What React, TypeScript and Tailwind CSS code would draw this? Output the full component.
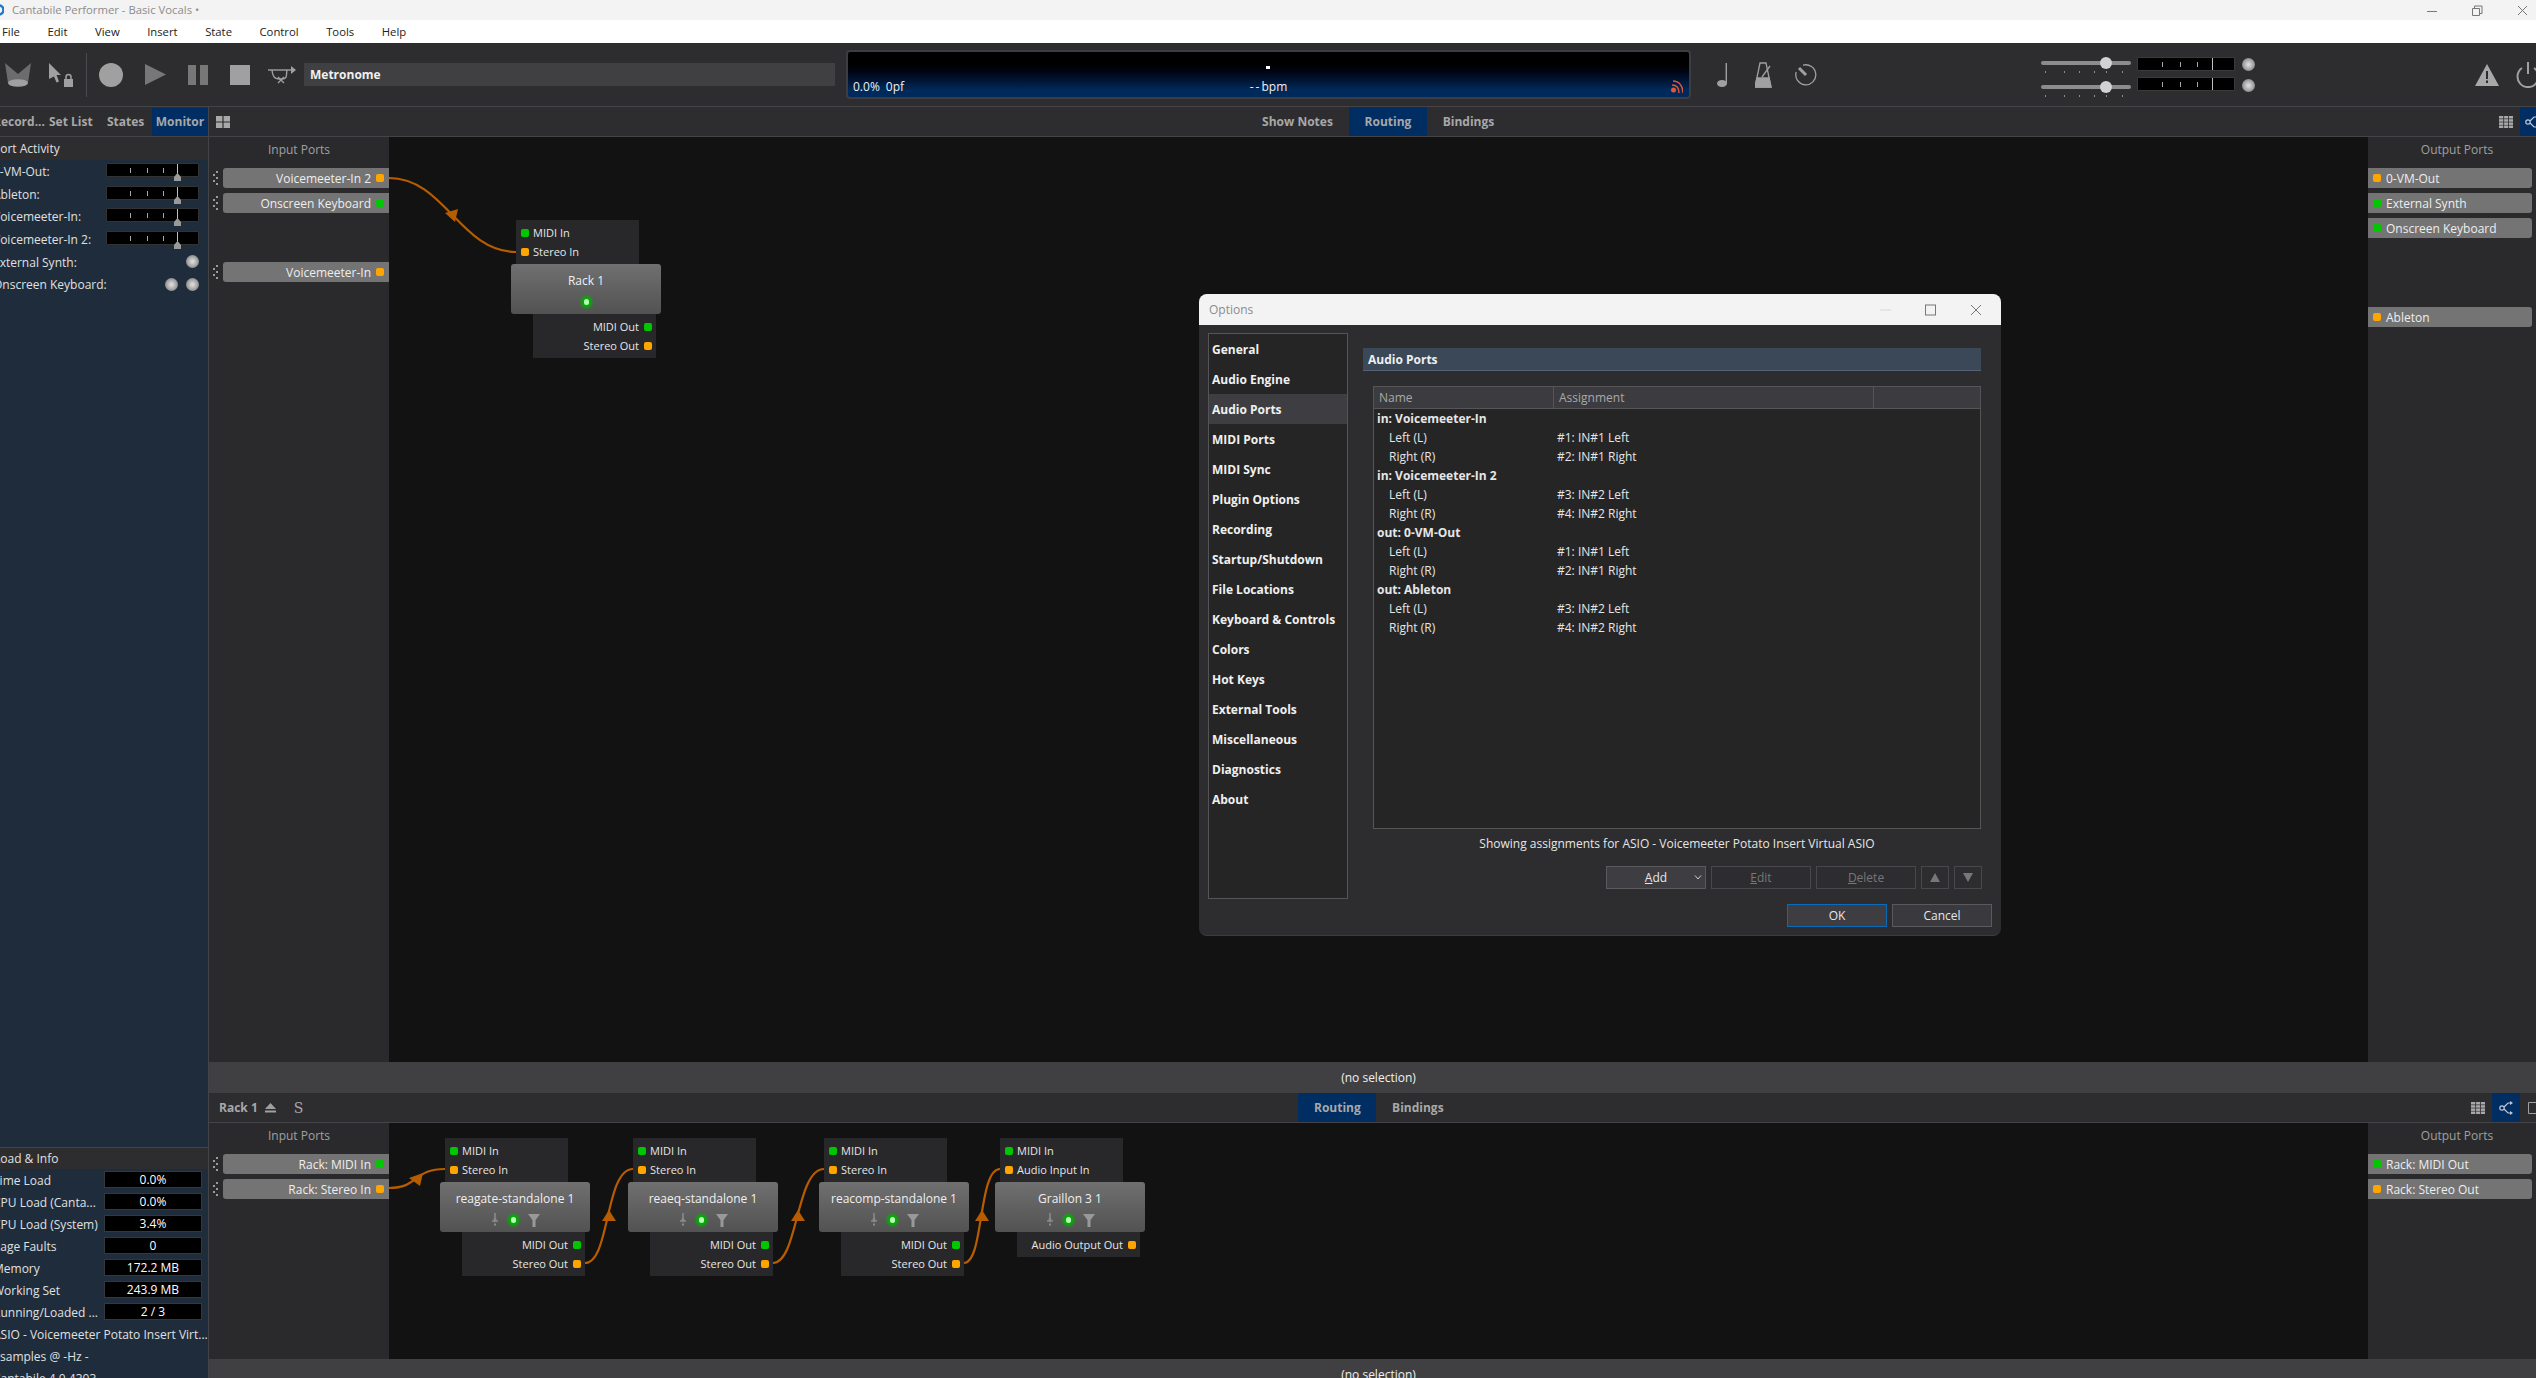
import React from "react";

const Led = ({ c }: { c: "g" | "o" }) => (
  <span className={c === "g" ? "block w-[8px] h-[8px] rounded-[2px] bg-[#00c800] shrink-0" : "block w-[8px] h-[8px] rounded-[2px] bg-[#ffa500] shrink-0"} />
);

const Ball = () => (
  <span className="block w-[13px] h-[13px] rounded-full bg-[radial-gradient(circle,#d8d8d8_10%,#a8a8a8_50%,#666666_100%)] shrink-0" />
);

const GlowLed = () => (
  <span className="block w-[5px] h-[6px] rounded-full bg-[#b4ffb4] shadow-[0_0_3px_3px_#00b000]" />
);

const Grip = () => (
  <svg width="8" height="16" viewBox="0 0 8 16" className="shrink-0" fill="#9a9a9a">
    <rect x="4" y="1" width="2" height="2" />
    <rect x="1" y="4" width="2" height="2" />
    <rect x="4" y="7" width="2" height="2" />
    <rect x="1" y="10" width="2" height="2" />
    <rect x="4" y="13" width="2" height="2" />
  </svg>
);

const InPort = ({ name, c, className }: { name: string; c: "g" | "o"; className?: string }) => (
  <div className={"flex items-center h-[20px] pl-[3px] " + (className ?? "")}>
    <Grip />
    <div className="ml-[3px] flex-1 h-[20px] bg-[#747474] rounded-l-[3px] flex items-center justify-end pr-[5px] gap-[5px] text-[#eeeeee]">
      <span className="pt-[1px]">{name}</span>
      <Led c={c} />
    </div>
  </div>
);

const OutPort = ({ name, c, className }: { name: string; c: "g" | "o"; className?: string }) => (
  <div className={"h-[20px] mr-[4px] bg-[#747474] rounded-r-[3px] flex items-center pl-[5px] gap-[5px] text-[#eeeeee] " + (className ?? "")}>
    <Led c={c} />
    <span className="pt-[1px]">{name}</span>
  </div>
);

const PinIcon = () => (
  <svg width="8" height="14" viewBox="0 0 8 14" fill="none" stroke="#8c8c8c" strokeWidth="1.5">
    <path d="M4 0V8M1 8H7M3 5.5L4 8L5 5.5" />
    <rect x="3" y="10.5" width="2" height="2" fill="#8c8c8c" stroke="none" />
  </svg>
);

const FilterIcon = () => (
  <svg width="12" height="13" viewBox="0 0 12 13" fill="#999999">
    <path d="M0 0H12L7.5 6V13H4.5V6Z" />
  </svg>
);

type NodeProps = {
  x: number;
  y: number;
  title: string;
  inputs: [string, "g" | "o"][];
  outputs: [string, "g" | "o"][];
  icons?: boolean;
};

const RouteNode = ({ x, y, title, inputs, outputs, icons = true }: NodeProps) => (
  <div className="absolute w-[150px] flex flex-col text-[#e6e6e6]" style={{ left: x, top: y }}>
    <div className="ml-[5px] w-[123px] h-[44px] bg-[#28282a] pt-[3px] pl-[5px] text-[11px]">
      {inputs.map(([n, c]) => (
        <div key={n} className="h-[19px] flex items-center gap-[4px]">
          <Led c={c} />
          <span className="whitespace-nowrap">{n}</span>
        </div>
      ))}
    </div>
    <div className="h-[50px] rounded-[3px] bg-gradient-to-b from-[#707070] to-[#525252] flex flex-col items-center pt-[7px]">
      <div className="h-[20px] leading-[20px] text-[#f0f0f0] whitespace-nowrap">{title}</div>
      <div className="h-[14px] mt-[4px] flex items-center justify-center">
        {icons ? (
          <div className="flex items-center gap-[12px]">
            <PinIcon />
            <GlowLed />
            <FilterIcon />
          </div>
        ) : (
          <GlowLed />
        )}
      </div>
    </div>
    <div className="ml-[22px] w-[123px] bg-[#28282a] pt-[3px] pb-[3px] pr-[4px] text-[11px]">
      {outputs.map(([n, c]) => (
        <div key={n} className="h-[19px] flex items-center justify-end gap-[5px]">
          <span className="whitespace-nowrap">{n}</span>
          <Led c={c} />
        </div>
      ))}
    </div>
  </div>
);

const Wire = ({ d, arrow }: { d: string; arrow: string }) => (
  <>
    <path d={d} fill="none" stroke="#b85c00" strokeWidth="2.2" />
    <polygon points={arrow} fill="#b85c00" />
  </>
);

const Ticks = ({ xs, tall }: { xs: number[]; tall: number }) => (
  <svg className="absolute inset-0" width="100%" height="100%">
    {xs.map((x) => (
      <rect key={x} x={x} y="4" width="1" height="5" fill="#a8a8a8" />
    ))}
    <rect x={tall} y="0" width="1" height="14" fill="#c0c0c0" />
  </svg>
);

const SmallMeter = () => (
  <div className="relative w-[93px] h-[14px] bg-black border border-[#333333] rounded-[1px]">
    <Ticks xs={[23, 40, 56]} tall={70} />
    <svg className="absolute left-[66px] top-[9px]" width="9" height="8" viewBox="0 0 9 8" fill="#9a9a9a">
      <path d="M4.5 0L8 4V8H1V4Z" />
    </svg>
  </div>
);

const SliderRow = () => (
  <div className="relative w-[90px] h-[24px]">
    <div className="absolute left-0 right-0 top-[4px] h-[4px] rounded-full bg-[#8c8c8c]" />
    <div className="absolute left-[59px] top-0 w-[12px] h-[12px] rounded-full bg-[#d2d2d2]" />
    <svg className="absolute left-0 top-[14px]" width="90" height="3" fill="#8c8c8c">
      {[4, 23, 38, 53, 65, 81].map((x) => (
        <rect key={x} x={x} y="0" width="1" height="2" />
      ))}
    </svg>
  </div>
);

const MasterMeter = () => (
  <div className="relative w-[98px] h-[14px] bg-black border border-[#3a3a3a] rounded-[1px]">
    <Ticks xs={[24, 42, 59]} tall={74} />
  </div>
);

const GridIcon = () => (
  <svg width="14" height="12" viewBox="0 0 14 12" fill="#a8a8a8">
    <rect x="0" y="0" width="14" height="2.5" />
    <rect x="0" y="3.2" width="14" height="2.5" />
    <rect x="0" y="6.4" width="14" height="2.5" />
    <rect x="0" y="9.5" width="14" height="2.5" />
    <rect x="4.3" y="0" width="0.8" height="12" fill="#2d2d30" />
    <rect x="9.1" y="0" width="0.8" height="12" fill="#2d2d30" />
  </svg>
);

const RouteIcon = () => (
  <svg width="14" height="14" viewBox="0 0 14 14" fill="none" stroke="#c0c8d4" strokeWidth="1.2">
    <circle cx="3" cy="7" r="2.2" />
    <path d="M5 6L9 2H12M5 8L9 12H12" />
    <path d="M11 0L14 2L11 4ZM11 10L14 12L11 14Z" fill="#c0c8d4" stroke="none" />
  </svg>
);

const navItems = [
  "General",
  "Audio Engine",
  "Audio Ports",
  "MIDI Ports",
  "MIDI Sync",
  "Plugin Options",
  "Recording",
  "Startup/Shutdown",
  "File Locations",
  "Keyboard & Controls",
  "Colors",
  "Hot Keys",
  "External Tools",
  "Miscellaneous",
  "Diagnostics",
  "About",
];

const assignRows: [string, string, boolean][] = [
  ["in: Voicemeeter-In", "", true],
  ["Left (L)", "#1: IN#1 Left", false],
  ["Right (R)", "#2: IN#1 Right", false],
  ["in: Voicemeeter-In 2", "", true],
  ["Left (L)", "#3: IN#2 Left", false],
  ["Right (R)", "#4: IN#2 Right", false],
  ["out: 0-VM-Out", "", true],
  ["Left (L)", "#1: IN#1 Left", false],
  ["Right (R)", "#2: IN#1 Right", false],
  ["out: Ableton", "", true],
  ["Left (L)", "#3: IN#2 Left", false],
  ["Right (R)", "#4: IN#2 Right", false],
];

const activity: [string, "meter" | number][] = [
  ["0-VM-Out:", "meter"],
  ["Ableton:", "meter"],
  ["Voicemeeter-In:", "meter"],
  ["Voicemeeter-In 2:", "meter"],
  ["External Synth:", 1],
  ["Onscreen Keyboard:", 2],
];

const loadRows: [string, string][] = [
  ["Time Load", "0.0%"],
  ["CPU Load (Canta...", "0.0%"],
  ["CPU Load (System)", "3.4%"],
  ["Page Faults", "0"],
  ["Memory", "172.2 MB"],
  ["Working Set", "243.9 MB"],
  ["Running/Loaded ...", "2 / 3"],
];

const Dialog = () => (
  <div className="absolute left-[1199px] top-[294px] w-[802px] h-[642px] rounded-[8px] bg-[#2d2d30] border-b border-[#3c3c40] flex flex-col overflow-hidden text-[#e6e6e6]">
    <div className="h-[31px] bg-[#f3f3f3] flex items-center pl-[10px] text-[#8c8c8c] shrink-0">
      <span>Options</span>
      <svg className="ml-auto mr-[19px]" width="102" height="12" viewBox="0 0 102 12" fill="none" strokeWidth="1">
        <path d="M0 6H11" stroke="#d8d8d8" />
        <rect x="45.5" y="1" width="10" height="10" stroke="#777777" />
        <path d="M91 1L101 11M101 1L91 11" stroke="#777777" />
      </svg>
    </div>
    <div className="flex-1 flex pl-[9px] pt-[8px]">
      <div className="w-[140px] h-[566px] bg-[#252526] border border-[#555558] font-bold text-[#f0f0f0]">
        {navItems.map((n) => (
          <div key={n} className={n === "Audio Ports" ? "h-[30px] flex items-center pl-[3px] pt-[1px] bg-[#3e3e42] whitespace-nowrap" : "h-[30px] flex items-center pl-[3px] pt-[1px] whitespace-nowrap"}>
            {n}
          </div>
        ))}
      </div>
      <div className="ml-[15px] w-[629px] flex flex-col pt-[15px]">
        <div className="mr-[11px] h-[23px] bg-[#3a4858] border-b border-[#566274] flex items-center pl-[5px] pt-[1px] font-bold text-[#f0f0f0]">Audio Ports</div>
        <div className="mt-[15px] ml-[10px] mr-[11px] h-[443px] bg-[#252526] border border-[#555558] flex flex-col">
          <div className="h-[22px] bg-[#3c3c40] border-b border-[#555558] flex text-[#a8a8a8] shrink-0">
            <div className="w-[180px] border-r border-[#555558] pl-[5px] pt-[1px] flex items-center">Name</div>
            <div className="w-[320px] border-r border-[#555558] pl-[5px] pt-[1px] flex items-center">Assignment</div>
          </div>
          <div>
            {assignRows.map(([n, a, b], i) => (
              <div key={i} className="h-[19px] flex items-center">
                <div className={b ? "w-[183px] pl-[3px] font-bold whitespace-nowrap" : "w-[183px] pl-[15px]"}>{n}</div>
                <div>{a}</div>
              </div>
            ))}
          </div>
        </div>
        <div className="mt-[5px] h-[19px] ml-[10px] mr-[11px] flex items-center justify-center text-[#e6e6e6]">Showing assignments for ASIO - Voicemeeter Potato Insert Virtual ASIO</div>
        <div className="mt-[13px] mr-[10px] flex justify-end gap-[5px] h-[23px]">
          <div className="relative w-[100px] bg-[#3e3e42] border border-[#5a5a5e] flex items-center justify-center">
            <span><span className="underline">A</span>dd</span>
            <svg className="absolute right-[3px] top-[8px]" width="8" height="5" viewBox="0 0 8 5" fill="none" stroke="#cccccc">
              <path d="M1 0.5L4 4L7 0.5" />
            </svg>
          </div>
          <div className="w-[100px] border border-[#48484c] flex items-center justify-center text-[#777777]">
            <span><span className="underline">E</span>dit</span>
          </div>
          <div className="w-[100px] border border-[#48484c] flex items-center justify-center text-[#777777]">
            <span><span className="underline">D</span>elete</span>
          </div>
          <div className="w-[28px] border border-[#48484c] flex items-center justify-center">
            <svg width="10" height="9" viewBox="0 0 10 9" fill="#777777"><path d="M5 0L10 9H0Z" /></svg>
          </div>
          <div className="w-[28px] border border-[#48484c] flex items-center justify-center">
            <svg width="10" height="9" viewBox="0 0 10 9" fill="#777777"><path d="M5 9L10 0H0Z" /></svg>
          </div>
        </div>
        <div className="mt-[15px] flex justify-end gap-[5px] h-[23px]">
          <div className="w-[100px] bg-[#3e3e42] border border-[#0a6cb8] flex items-center justify-center">OK</div>
          <div className="w-[100px] bg-[#3a3a3e] border border-[#5a5a5e] flex items-center justify-center">Cancel</div>
        </div>
      </div>
    </div>
  </div>
);

export default function App() {
  return (
    <div className="relative w-[2536px] h-[1378px] overflow-hidden flex flex-col bg-[#2d2d30] font-['Open_Sans',sans-serif] text-[12px] leading-[16px]">
      {/* title bar */}
      <div className="h-[20px] bg-[#f3f3f3] flex items-center text-[#8c8c8c] shrink-0">
        <svg className="shrink-0" width="4" height="14" viewBox="0 0 4 14"><circle cx="-1" cy="7" r="4.5" fill="none" stroke="#1e78c8" strokeWidth="2.5" /></svg>
        <span className="ml-[8px] text-[11.3px]">Cantabile Performer - Basic Vocals •</span>
        <svg className="ml-auto mr-[8px]" width="101" height="11" viewBox="0 0 101 11" fill="none" stroke="#777777">
          <path d="M0 6.5H10" />
          <path d="M45.5 3.5H52.5V10.5H45.5ZM47.5 3.5V1H55V8.5H52.5" />
          <path d="M91 1L100 10M100 1L91 10" />
        </svg>
      </div>
      {/* menu */}
      <div className="h-[23px] bg-white flex items-center pl-[2px] gap-[27.5px] text-[#222222] text-[11.3px] shrink-0">
        {["File", "Edit", "View", "Insert", "State", "Control", "Tools", "Help"].map((m) => (
          <span key={m}>{m}</span>
        ))}
      </div>
      {/* toolbar */}
      <div className="h-[64px] bg-[#2d2d30] border-b border-[#444448] flex items-center shrink-0">
        <svg className="ml-[5px] shrink-0" width="26" height="24" viewBox="0 0 26 24">
          <path d="M0 0L13 11L26 0L23 20H3Z" fill="#6c6c6c" />
          <ellipse cx="13" cy="20" rx="10" ry="3.8" fill="#a0a0a0" />
        </svg>
        <svg className="ml-[18px] shrink-0" width="24" height="24" viewBox="0 0 24 24" fill="#a0a0a0">
          <path d="M0 0L12 12H7.5L10 18.5L7.5 19.5L5 13.5L0 16Z" />
          <rect x="15" y="16" width="9" height="8" />
          <path d="M17 16V14A2.5 2.5 0 0 1 22 14V16" fill="none" stroke="#a0a0a0" strokeWidth="1.5" />
        </svg>
        <div className="ml-[13px] w-[1px] h-[44px] bg-[#4a4a4e] shrink-0" />
        <div className="ml-[12px] w-[24px] h-[24px] rounded-full bg-[#a0a0a0] shrink-0" />
        <svg className="ml-[22px] shrink-0" width="21" height="21" viewBox="0 0 21 21" fill="#777777"><path d="M0 0L21 10.5L0 21Z" /></svg>
        <div className="ml-[22px] w-[20px] h-[20px] flex justify-between shrink-0">
          <div className="w-[8px] bg-[#777777]" />
          <div className="w-[8px] bg-[#777777]" />
        </div>
        <div className="ml-[22px] w-[20px] h-[20px] bg-[#a0a0a0] shrink-0" />
        <svg className="ml-[18px] shrink-0" width="28" height="18" viewBox="0 0 28 18" fill="none" stroke="#a0a0a0" strokeWidth="1.4">
          <path d="M0 4H23" />
          <path d="M23 0L28 4L23 8Z" fill="#a0a0a0" stroke="none" />
          <path d="M4 4C5 13 8 13 14 13C20 13 18 8 19 4" />
          <path d="M10 11L16 17M16 11L10 17" />
        </svg>
        <div className="ml-[8px] w-[531px] h-[23px] bg-[#404042] flex items-center pl-[6px] font-bold text-[#f0f0f0] shrink-0">Metronome</div>
        <div className="relative ml-[11px] w-[845px] h-[49px] rounded-[4px] border-2 border-[#3c3c42] bg-gradient-to-b from-[#000000] from-[15%] to-[#002a5c] to-[85%] text-[#f0f0f0] shrink-0">
          <div className="absolute left-[418px] top-[14px] w-[4px] h-[3px] bg-white" />
          <div className="absolute left-[5px] bottom-[2px] flex gap-[6px]">
            <span>0.0%</span>
            <span>0pf</span>
          </div>
          <div className="absolute left-0 right-0 bottom-[2px] text-center"><span className="tracking-[2px]">--</span>bpm</div>
          <svg className="absolute right-[6px] bottom-[4px]" width="12" height="13" viewBox="0 0 12 13" fill="none" stroke="#e0583c" strokeWidth="1.4">
            <circle cx="2.5" cy="10" r="2.5" fill="#e0583c" stroke="none" />
            <path d="M1 5C6 5 8 8 8 13M2 1C8 1 12 6 12 13" />
          </svg>
        </div>
        <svg className="ml-[26px] shrink-0" width="10" height="24" viewBox="0 0 10 24" fill="#a0a0a0">
          <rect x="8.6" y="0" width="1.4" height="21" />
          <ellipse cx="5" cy="20.5" rx="5" ry="3.5" />
        </svg>
        <svg className="ml-[28px] shrink-0" width="18" height="26" viewBox="0 0 18 26" fill="none" stroke="#a0a0a0" strokeWidth="1.3">
          <path d="M5 1H11L16 25H0Z" />
          <path d="M2 16H14L16 25H0Z" fill="#a0a0a0" />
          <path d="M7 15L15 4" />
        </svg>
        <svg className="ml-[22px] shrink-0" width="22" height="22" viewBox="0 0 22 22" fill="none" stroke="#a0a0a0" strokeWidth="1.3">
          <path d="M8 1.2A10 10 0 1 1 1.2 8" />
          <path d="M4 4L11 11" strokeWidth="3" />
        </svg>
        <div className="ml-[224px] self-start mt-[14px] flex shrink-0">
          <div className="flex flex-col">
            <SliderRow />
            <SliderRow />
          </div>
          <div className="ml-[6px] flex flex-col gap-[6px]">
            <MasterMeter />
            <MasterMeter />
          </div>
          <div className="ml-[7px] mt-[1px] flex flex-col gap-[8px]">
            <Ball />
            <Ball />
          </div>
        </div>
        <svg className="ml-[220px] shrink-0" width="24" height="22" viewBox="0 0 24 22">
          <path d="M12 0L24 22H0Z" fill="#a8a8a8" />
          <rect x="11" y="7" width="2" height="8" fill="#2d2d30" />
          <rect x="11" y="16.5" width="2" height="2.5" fill="#2d2d30" />
        </svg>
        <svg className="ml-[16px] shrink-0" width="26" height="26" viewBox="0 0 26 26" fill="none" stroke="#a0a0a0" strokeWidth="2">
          <path d="M7 6A10.5 10.5 0 1 0 19 6" />
          <path d="M13 0V12" />
        </svg>
      </div>
      {/* tab bar */}
      <div className="h-[30px] bg-[#2d2d30] border-b border-[#444448] flex items-stretch font-bold text-[#a8a8a8] shrink-0">
        <div className="w-[209px] flex items-center border-r border-[#444448] shrink-0 overflow-hidden pt-[1px]">
          <span className="-ml-[7px] w-[56px] shrink-0">Record...</span>
          <span className="w-[58px] shrink-0">Set List</span>
          <span className="w-[45px] shrink-0">States</span>
          <span className="h-full -mt-[1px] pt-[1px] flex items-center justify-center w-[56px] bg-[#002d62] shrink-0">Monitor</span>
        </div>
        <svg className="ml-[7px] self-center" width="14" height="12" viewBox="0 0 14 12" fill="#a8a8a8">
          <rect x="0" y="0" width="6.4" height="5.5" />
          <rect x="7.6" y="0" width="6.4" height="5.5" />
          <rect x="0" y="6.5" width="6.4" height="5.5" />
          <rect x="7.6" y="6.5" width="6.4" height="5.5" />
        </svg>
        <div className="ml-[1016px] w-[103px] flex items-center justify-center pt-[1px]">Show Notes</div>
        <div className="w-[78px] flex items-center justify-center bg-[#002d62] pt-[1px]">Routing</div>
        <div className="w-[83px] flex items-center justify-center pt-[1px]">Bindings</div>
        <div className="ml-auto self-center mr-[7px]"><GridIcon /></div>
        <div className="w-[16px] bg-[#002d62] flex items-center overflow-hidden pl-[5px] shrink-0">
          <div className="shrink-0"><RouteIcon /></div>
        </div>
      </div>
      {/* main */}
      <div className="flex-1 flex min-h-0">
        {/* left panel */}
        <div className="w-[209px] shrink-0 border-r border-[#444448] flex flex-col overflow-hidden text-[#e0e0e0]">
          <div className="h-[23px] pt-[1px] flex items-center shrink-0"><span className="-ml-[7px]">Port Activity</span></div>
          <div className="h-[987px] bg-[#1e2c3c] pt-[1px] shrink-0">
            {activity.map(([n, k]) => (
              <div key={n} className="relative h-[22.6px] flex items-center">
                <span className="-ml-[7px] whitespace-nowrap">{n}</span>
                {k === "meter" ? (
                  <div className="absolute left-[106px] top-[2px]"><SmallMeter /></div>
                ) : k === 1 ? (
                  <div className="absolute left-[186px] top-[4px]"><Ball /></div>
                ) : (
                  <div className="absolute left-[165px] top-[4px] flex gap-[8px]"><Ball /><Ball /></div>
                )}
              </div>
            ))}
          </div>
          <div className="h-[22px] border-t border-[#444448] flex items-center shrink-0"><span className="-ml-[6px]">Load &amp; Info</span></div>
          <div className="flex-1 bg-[#1e2c3c] pt-[1px]">
            {loadRows.map(([n, v]) => (
              <div key={n} className="h-[22px] flex items-center relative">
                <span className="-ml-[7px] whitespace-nowrap">{n}</span>
                <div className="absolute left-[104px] top-[1px] w-[98px] h-[17px] bg-black border border-[#33383f] text-white text-center leading-[15px]">{v}</div>
              </div>
            ))}
            <div className="h-[22px] flex items-center"><span className="-ml-[7px] whitespace-nowrap">ASIO - Voicemeeter Potato Insert Virt...</span></div>
            <div className="h-[22px] flex items-center"><span className="whitespace-nowrap">samples @ -Hz -</span></div>
            <div className="h-[22px] flex items-center"><span className="-ml-[7px] whitespace-nowrap">Cantabile 4.0.4303</span></div>
          </div>
        </div>
        {/* right content */}
        <div className="flex-1 flex flex-col min-w-0">
          <div className="h-[925px] flex shrink-0">
            <div className="w-[180px] bg-[#2a2a2c] flex flex-col shrink-0">
              <div className="h-[31px] pb-[6px] flex items-center justify-center text-[#a0a0a0]">Input Ports</div>
              <InPort name="Voicemeeter-In 2" c="o" />
              <InPort name="Onscreen Keyboard" c="g" className="mt-[5px]" />
              <InPort name="Voicemeeter-In" c="o" className="mt-[49px]" />
            </div>
            <div className="relative flex-1 bg-[#121212]">
              <svg className="absolute inset-0 w-full h-full pointer-events-none">
                <Wire d="M0 41C56 41 71 115 127 115" arrow="56,76 69,72 66,85" />
              </svg>
              <RouteNode
                x={122}
                y={83}
                title="Rack 1"
                icons={false}
                inputs={[["MIDI In", "g"], ["Stereo In", "o"]]}
                outputs={[["MIDI Out", "g"], ["Stereo Out", "o"]]}
              />
            </div>
            <div className="w-[168px] bg-[#2a2a2c] flex flex-col shrink-0">
              <div className="h-[31px] pb-[6px] pl-[10px] flex items-center justify-center text-[#a0a0a0]">Output Ports</div>
              <OutPort name="0-VM-Out" c="o" />
              <OutPort name="External Synth" c="g" className="mt-[5px]" />
              <OutPort name="Onscreen Keyboard" c="g" className="mt-[5px]" />
              <OutPort name="Ableton" c="o" className="mt-[69px]" />
            </div>
          </div>
          <div className="h-[31px] bg-[#404042] flex items-center justify-center text-[#f0f0f0] shrink-0 pl-[12px]">(no selection)</div>
          <div className="h-[30px] bg-[#2d2d30] border-b border-[#444448] flex items-stretch font-bold text-[#a8a8a8] shrink-0">
            <span className="ml-[10px] self-center pt-[1px]">Rack 1</span>
            <svg className="ml-[7px] self-center" width="11" height="10" viewBox="0 0 11 10" fill="#a0a0a0">
              <path d="M5.5 0L11 6H0Z" />
              <rect x="0" y="7.5" width="11" height="2" />
            </svg>
            <span className="ml-[18px] self-center font-['DejaVu_Serif',serif] text-[14px] font-normal">S</span>
            <div className="ml-[995px] w-[78px] bg-[#002d62] flex items-center justify-center pt-[1px]">Routing</div>
            <div className="w-[83px] flex items-center justify-center pt-[1px]">Bindings</div>
            <div className="ml-auto self-center mr-[7px]"><GridIcon /></div>
            <div className="w-[28px] bg-[#002d62] flex items-center justify-center shrink-0"><RouteIcon /></div>
            <svg className="ml-[8px] self-center shrink-0" width="8" height="12" viewBox="0 0 8 12" fill="none" stroke="#a0a0a0">
              <path d="M8 0.5H0.5V11.5H8" />
            </svg>
          </div>
          <div className="h-[236px] flex shrink-0">
            <div className="w-[180px] bg-[#2a2a2c] flex flex-col shrink-0">
              <div className="h-[31px] pb-[6px] flex items-center justify-center text-[#a0a0a0]">Input Ports</div>
              <InPort name="Rack: MIDI In" c="g" />
              <InPort name="Rack: Stereo In" c="o" className="mt-[5px]" />
            </div>
            <div className="relative flex-1 bg-[#121212]">
              <RouteNode x={51} y={15} title="reagate-standalone 1" inputs={[["MIDI In", "g"], ["Stereo In", "o"]]} outputs={[["MIDI Out", "g"], ["Stereo Out", "o"]]} />
              <RouteNode x={239} y={15} title="reaeq-standalone 1" inputs={[["MIDI In", "g"], ["Stereo In", "o"]]} outputs={[["MIDI Out", "g"], ["Stereo Out", "o"]]} />
              <RouteNode x={430} y={15} title="reacomp-standalone 1" inputs={[["MIDI In", "g"], ["Stereo In", "o"]]} outputs={[["MIDI Out", "g"], ["Stereo Out", "o"]]} />
              <RouteNode x={606} y={15} title="Graillon 3 1" inputs={[["MIDI In", "g"], ["Audio Input In", "o"]]} outputs={[["Audio Output Out", "o"]]} />
              <svg className="absolute inset-0 w-full h-full pointer-events-none">
                <Wire d="M0 65C30 65 24 46 56 46" arrow="34,50 20,55 31,63" />
                <Wire d="M196 140C221 140 216 46 244 46" arrow="220,87 213,98 227,98" />
                <Wire d="M384 140C409 140 407 46 435 46" arrow="409,87 402,98 416,98" />
                <Wire d="M575 140C595 140 589 46 611 46" arrow="593,87 586,98 600,98" />
              </svg>
            </div>
            <div className="w-[168px] bg-[#2a2a2c] flex flex-col shrink-0">
              <div className="h-[31px] pb-[6px] pl-[10px] flex items-center justify-center text-[#a0a0a0]">Output Ports</div>
              <OutPort name="Rack: MIDI Out" c="g" />
              <OutPort name="Rack: Stereo Out" c="o" className="mt-[5px]" />
            </div>
          </div>
          <div className="h-[31px] bg-[#404042] flex items-center justify-center text-[#f0f0f0] shrink-0 pl-[12px]">(no selection)</div>
        </div>
      </div>
      <Dialog />
    </div>
  );
}
